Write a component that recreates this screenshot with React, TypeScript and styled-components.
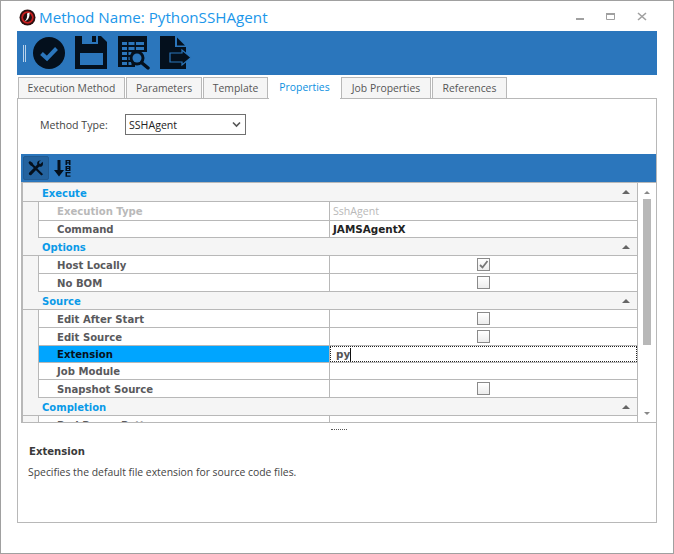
import { createGlobalStyle } from "styled-components";
import styled from "styled-components";

const GlobalStyle = createGlobalStyle`
  html, body {
    margin: 0;
    padding: 0;
    background: #fff;
  }
  * {
    box-sizing: border-box;
  }
`;

const Window = styled.div`
  width: 674px;
  height: 554px;
  border: 1px solid #a0a0a0;
  background: #fff;
  padding: 0 16px 30px 16px;
  display: flex;
  flex-direction: column;
  font-family: "Open Sans", "Liberation Sans", sans-serif;
  font-size: 11px;
  color: #444;
  overflow: hidden;
`;

const TitleBar = styled.div`
  height: 30px;
  display: flex;
  align-items: center;
  padding: 2px 0 0 2px;
`;

const Title = styled.div`
  margin-left: 3px;
  font-family: "Open Sans", sans-serif;
  font-size: 15.2px;
  color: #1c97ea;
  flex: 1;
`;

const WindowControls = styled.div`
  display: flex;
  align-items: center;
  gap: 18px;
  margin-right: 9px;
  svg {
    display: block;
  }
`;

const Toolbar = styled.div`
  height: 44px;
  background: #2b76bc;
  display: flex;
  align-items: center;
  padding-left: 6px;
`;

const Grip = styled.div`
  width: 3px;
  height: 17px;
  border-left: 1px solid #b9d2ea;
  border-right: 1px solid #b9d2ea;
  margin-right: 7px;
`;

const ToolIcon = styled.div`
  width: 42px;
  height: 34px;
  flex: none;
  svg {
    display: block;
  }
`;

const TabRow = styled.div`
  display: flex;
  height: 23px;
  padding-left: 1px;
  margin-top: 0;
  position: relative;
  z-index: 1;
`;

const Tab = styled.div<{ $active?: boolean; $width: number }>`
  width: ${(p) => p.$width}px;
  margin-right: 1px;
  margin-top: ${(p) => (p.$active ? 0 : 2)}px;
  height: ${(p) => (p.$active ? 24 : 21)}px;
  display: flex;
  align-items: center;
  justify-content: center;
  font-size: 10.4px;
  color: ${(p) => (p.$active ? "#0a8fdf" : "#555")};
  background: ${(p) => (p.$active ? "#fff" : "#f5f5f5")};
  border: ${(p) => (p.$active ? "none" : "1px solid #b8b8b8")};
  border-bottom: none;
`;

const TabPanel = styled.div`
  height: 425px;
  width: 640px;
  border: 1px solid #b8b8b8;
  padding: 15px 0 0 3px;
  display: flex;
  flex-direction: column;
`;

const MethodRow = styled.div`
  display: flex;
  align-items: center;
  padding-left: 19px;
  height: 21px;
`;

const MethodLabel = styled.div`
  width: 85px;
  font-size: 10.6px;
  color: #444;
`;

const SelectBox = styled.div`
  width: 121px;
  height: 21px;
  border: 1px solid #707070;
  display: flex;
  align-items: center;
  justify-content: space-between;
  padding: 0 4px 0 3px;
  font-size: 10.6px;
  color: #222;
`;

const GridBar = styled.div`
  margin-top: 19px;
  height: 28px;
  background: #2b76bc;
  display: flex;
  align-items: center;
  padding-left: 2px;
  gap: 4px;
`;

const BarButton = styled.div<{ $selected?: boolean }>`
  width: 26px;
  height: 24px;
  display: flex;
  align-items: center;
  justify-content: center;
  background: ${(p) => (p.$selected ? "#24639f" : "transparent")};
  border: 1px solid ${(p) => (p.$selected ? "#215a91" : "transparent")};
  border-radius: 2px;
`;

const GridWrap = styled.div`
  height: 241px;
  width: 635px;
  border-left: 2px solid #b8b8b8;
  border-bottom: 1px solid #b8b8b8;
  border-top: 1px solid #b8b8b8;
  display: flex;
  overflow: hidden;
`;

const GridBody = styled.div`
  width: 615px;
  border-right: 1px solid #b8b8b8;
  overflow: hidden;
  flex: none;
`;

const GroupRow = styled.div<{ $h: number }>`
  height: ${(p) => p.$h}px;
  background: #f5f5f5;
  border-bottom: 1px solid #b8b8b8;
  display: flex;
  align-items: center;
  justify-content: space-between;
  padding: 0 7px 0 19px;
`;

// a flex-centred 10px label lands a pixel high in these rows
const GroupLabel = styled.span<{ $nudge?: number }>`
  padding-top: ${(p) => p.$nudge ?? 2}px;
  font-family: "DejaVu Sans", sans-serif;
  font-weight: 700;
  font-size: 10px;
  line-height: 14px;
  color: #0a9ae8;
`;

const Caret = styled.div`
  width: 0;
  height: 0;
  border-left: 4px solid transparent;
  border-right: 4px solid transparent;
  border-bottom: 4px solid #666;
`;

const PropRow = styled.div<{ $h: number }>`
  height: ${(p) => p.$h}px;
  display: flex;
  background: #f5f5f5;
  padding-left: 15px;
`;

const NameCell = styled.div<{ $selected?: boolean; $disabled?: boolean; $nudge?: boolean }>`
  width: 292px;
  flex: none;
  border-left: 1px solid #b8b8b8;
  border-right: 1px solid #b8b8b8;
  border-bottom: 1px solid #b8b8b8;
  background: ${(p) => (p.$selected ? "#00a5ff" : "#fff")};
  color: ${(p) => (p.$selected ? "#05121c" : p.$disabled ? "#b9b9b9" : "#59595c")};
  display: flex;
  align-items: center;
  padding: ${(p) => (p.$nudge ? 2 : 0)}px 0 0 18px;
  font-family: "DejaVu Sans", sans-serif;
  font-weight: 700;
  font-size: 10.1px;
`;

const ValueCell = styled.div<{ $center?: boolean }>`
  flex: 1;
  min-width: 0;
  background: #fff;
  border-bottom: 1px solid #b8b8b8;
  display: flex;
  align-items: center;
  justify-content: ${(p) => (p.$center ? "center" : "flex-start")};
  padding-left: ${(p) => (p.$center ? 0 : 3)}px;
  font-size: 10.6px;
`;

const DisabledValue = styled.span`
  color: #b9b9b9;
`;

const StrongValue = styled.span`
  font-family: "DejaVu Sans", sans-serif;
  font-weight: 700;
  font-size: 10.4px;
  color: #222;
`;

const EditValue = styled.div`
  width: calc(100% + 3px);
  flex: none;
  height: 100%;
  border: 1px dotted #222;
  display: flex;
  align-items: center;
  padding-left: 5px;
  font-family: "DejaVu Sans", sans-serif;
  font-weight: 700;
  font-size: 10.4px;
  color: #555;
  margin-left: -3px;
`;

const TextCursor = styled.span`
  width: 1px;
  height: 13px;
  background: #111;
`;

const Check = styled.div`
  width: 13px;
  height: 13px;
  border: 1px solid #8a8a8a;
  background: linear-gradient(#fff, #ececec);
  display: flex;
  align-items: center;
  justify-content: center;
`;

const Scrollbar = styled.div`
  flex: 1;
  background: #fff;
  display: flex;
  flex-direction: column;
  align-items: center;
  padding: 8px 0 7px;
`;

const Thumb = styled.div`
  width: 8px;
  height: 146px;
  background: #b8b8b8;
  margin-top: 5px;
  margin-bottom: auto;
`;

const SmallCaret = styled.div<{ $down?: boolean }>`
  width: 0;
  height: 0;
  border-left: 3px solid transparent;
  border-right: 3px solid transparent;
  ${(p) =>
    p.$down
      ? "border-top: 3px solid #888;"
      : "border-bottom: 3px solid #888;"}
`;

const Splitter = styled.div`
  height: 11px;
  padding-top: 1px;
  display: flex;
  justify-content: center;
  align-items: center;
`;

const SplitterDots = styled.div`
  width: 16px;
  border-top: 1px dotted #555;
`;

const HelpPanel = styled.div`
  padding: 12px 0 0 7px;
`;

const HelpTitle = styled.div`
  padding-left: 1px;
  font-family: "DejaVu Sans", sans-serif;
  font-weight: 700;
  font-size: 10.1px;
  color: #3a3a3a;
`;

const HelpText = styled.div`
  margin-top: 8px;
  font-size: 10.4px;
  color: #444;
`;

function Logo() {
  return (
    <svg width="17" height="17" viewBox="0 0 17 17">
      <circle cx="8.5" cy="8.5" r="8" fill="#2a1010" />
      <circle cx="8.5" cy="8.5" r="6.2" fill="#c81e1e" />
      <circle cx="8.5" cy="8.5" r="4.4" fill="#241010" />
      <path d="M10.5 3.5 C10.8 7 10 11 5.5 12.5 C8 10.5 8.5 7 8 4.5 Z" fill="#fff" />
    </svg>
  );
}

function CheckCircleIcon() {
  return (
    <svg width="32" height="34" viewBox="0 0 32 34">
      <circle cx="16" cy="17" r="16" fill="#04101d" />
      <path d="M8.5 17.5 L14 22.5 L23.5 12.5" fill="none" stroke="#2b76bc" strokeWidth="4" />
    </svg>
  );
}

function SaveIcon() {
  return (
    <svg width="32" height="34" viewBox="0 0 32 34">
      <path d="M0 0 H26 L32 6 V33 H0 Z" fill="#04101d" />
      <rect x="7" y="0" width="16" height="8" fill="#2b76bc" />
      <rect x="17" y="0" width="4" height="6" fill="#04101d" />
      <rect x="5" y="17" width="23" height="12" fill="#2b76bc" />
    </svg>
  );
}

function TableSearchIcon() {
  return (
    <svg width="33" height="34" viewBox="0 0 33 34">
      <path d="M1 0 H30 V16 H18 V31 H1 Z" fill="#04101d" />
      <path d="M5 6h5v3H5zM11.5 6h6v3h-6zM19 6h8v3h-8zM5 11h5v3H5zM11.5 11h6v3h-6zM19 11h8v3h-8zM5 16h5v3H5zM11.5 16h3v3h-3zM5 21h5v3H5zM11.5 21h3v3h-3zM5 26h5v3H5zM11.5 26h3v3h-3z" fill="#2b76bc" />
      <circle cx="20" cy="22" r="7.5" fill="#04101d" />
      <circle cx="20" cy="22" r="4.5" fill="#2b76bc" />
      <path d="M25 27 L31 32" stroke="#04101d" strokeWidth="3.4" strokeLinecap="round" />
    </svg>
  );
}

function ExportIcon() {
  return (
    <svg width="33" height="34" viewBox="0 0 33 34">
      <path d="M1 0 H16 V11 H27 V33 H1 Z" fill="#04101d" />
      <path d="M18 1.5 L26 9.5 H18 Z" fill="#04101d" />
      <path d="M11 17 H23 V14 L32 21.5 L23 29 V26 H11 Z" fill="#04101d" stroke="#2b76bc" strokeWidth="1.2" />
    </svg>
  );
}

function WrenchIcon() {
  return (
    <svg width="16" height="16" viewBox="0 0 18 18">
      <path d="M2 1 L5 3 L6 5 L17 16 L15 17.5 L4.5 7 L2.5 6 L0.5 3 Z" fill="#04101d" />
      <path d="M16.5 2 L14 4.5 L12.5 4 L12.5 2 L14.5 0.5 C11.5 0 9.5 2 10.5 5 L1.5 14 C0.5 15 1 16 1.5 16.5 C2 17 3 17.5 4 16.5 L12.5 7.5 C15.5 8.5 17.8 6 16.5 2 Z" fill="#04101d" />
    </svg>
  );
}

function SortIcon() {
  return (
    <svg width="18" height="17" viewBox="0 0 18 17">
      <path d="M4.5 0 H7.5 V10 H11 L6 16.5 L1 10 H4.5 Z" fill="#04101d" />
      <path d="M12.5 0 h5 v5 h-1.5 v-1.5 h-2 v1.5 h-1.5 Z M14 1.3 v.9 h2 v-.9 Z" fill="#04101d" fillRule="evenodd" />
      <path d="M12.5 6 h5 v5 h-5 Z M14 7 v.8 h2 V7 Z M14 9 v1 h2 V9 Z" fill="#04101d" fillRule="evenodd" />
      <path d="M12.5 12 h5 v1.3 h-3.5 v2.2 h3.5 v1.3 h-5 Z" fill="#04101d" />
    </svg>
  );
}

export default function App() {
  const tabs = [
    { label: "Execution Method", width: 107 },
    { label: "Parameters", width: 76 },
    { label: "Template", width: 65 },
    { label: "Properties", width: 71, active: true },
    { label: "Job Properties", width: 90 },
    { label: "References", width: 75 },
  ];

  return (
    <>
      <GlobalStyle />
      <Window>
        <TitleBar>
          <Logo />
          <Title>Method Name: PythonSSHAgent</Title>
          <WindowControls>
            <svg width="12" height="12" viewBox="0 0 12 12">
              <rect x="1" y="7" width="8" height="2" fill="#a0a0a0" />
            </svg>
            <svg width="13" height="12" viewBox="0 0 13 12">
              <path d="M1.5 2.5 H9.5 V8.5 H1.5 Z" fill="none" stroke="#a0a0a0" />
              <rect x="1" y="2" width="9" height="2" fill="#a0a0a0" />
            </svg>
            <svg width="12" height="12" viewBox="0 0 12 12">
              <path d="M2 2 L10 9 M10 2 L2 9" stroke="#a0a0a0" strokeWidth="1.6" />
            </svg>
          </WindowControls>
        </TitleBar>
        <Toolbar>
          <Grip />
          <ToolIcon>
            <CheckCircleIcon />
          </ToolIcon>
          <ToolIcon>
            <SaveIcon />
          </ToolIcon>
          <ToolIcon>
            <TableSearchIcon />
          </ToolIcon>
          <ToolIcon>
            <ExportIcon />
          </ToolIcon>
        </Toolbar>
        <TabRow>
          {tabs.map((t) => (
            <Tab key={t.label} $active={t.active} $width={t.width}>
              {t.label}
            </Tab>
          ))}
        </TabRow>
        <TabPanel>
          <MethodRow>
            <MethodLabel>Method Type:</MethodLabel>
            <SelectBox>
              SSHAgent
              <svg width="9" height="7" viewBox="0 0 9 7">
                <path d="M1 1.5 L4.5 5 L8 1.5" fill="none" stroke="#555" strokeWidth="1.6" />
              </svg>
            </SelectBox>
          </MethodRow>
          <GridBar>
            <BarButton $selected>
              <WrenchIcon />
            </BarButton>
            <SortIcon />
          </GridBar>
          <GridWrap>
            <GridBody>
              <GroupRow $h={19}>
                <GroupLabel $nudge={4}>Execute</GroupLabel>
                <Caret />
              </GroupRow>
              <PropRow $h={19}>
                <NameCell $disabled>Execution Type</NameCell>
                <ValueCell>
                  <DisabledValue>SshAgent</DisabledValue>
                </ValueCell>
              </PropRow>
              <PropRow $h={17}>
                <NameCell>Command</NameCell>
                <ValueCell>
                  <StrongValue>JAMSAgentX</StrongValue>
                </ValueCell>
              </PropRow>
              <GroupRow $h={18}>
                <GroupLabel>Options</GroupLabel>
                <Caret />
              </GroupRow>
              <PropRow $h={18}>
                <NameCell $nudge>Host Locally</NameCell>
                <ValueCell $center>
                  <Check>
                    <svg width="11" height="11" viewBox="0 0 11 11">
                      <path d="M2 6 L4.5 8.5 L9.5 2" fill="none" stroke="#777" strokeWidth="1.8" />
                    </svg>
                  </Check>
                </ValueCell>
              </PropRow>
              <PropRow $h={18}>
                <NameCell $nudge>No BOM</NameCell>
                <ValueCell $center>
                  <Check />
                </ValueCell>
              </PropRow>
              <GroupRow $h={18}>
                <GroupLabel>Source</GroupLabel>
                <Caret />
              </GroupRow>
              <PropRow $h={18}>
                <NameCell $nudge>Edit After Start</NameCell>
                <ValueCell $center>
                  <Check />
                </ValueCell>
              </PropRow>
              <PropRow $h={18}>
                <NameCell $nudge>Edit Source</NameCell>
                <ValueCell $center>
                  <Check />
                </ValueCell>
              </PropRow>
              <PropRow $h={17}>
                <NameCell $selected>Extension</NameCell>
                <ValueCell>
                  <EditValue>
                    py
                    <TextCursor />
                  </EditValue>
                </ValueCell>
              </PropRow>
              <PropRow $h={17}>
                <NameCell>Job Module</NameCell>
                <ValueCell />
              </PropRow>
              <PropRow $h={18}>
                <NameCell $nudge>Snapshot Source</NameCell>
                <ValueCell $center>
                  <Check />
                </ValueCell>
              </PropRow>
              <GroupRow $h={18}>
                <GroupLabel>Completion</GroupLabel>
                <Caret />
              </GroupRow>
              <PropRow $h={18}>
                <NameCell $nudge>Bad Regex Pattern</NameCell>
                <ValueCell />
              </PropRow>
            </GridBody>
            <Scrollbar>
              <SmallCaret />
              <Thumb />
              <SmallCaret $down />
            </Scrollbar>
          </GridWrap>
          <Splitter>
            <SplitterDots />
          </Splitter>
          <HelpPanel>
            <HelpTitle>Extension</HelpTitle>
            <HelpText>Specifies the default file extension for source code files.</HelpText>
          </HelpPanel>
        </TabPanel>
      </Window>
    </>
  );
}
